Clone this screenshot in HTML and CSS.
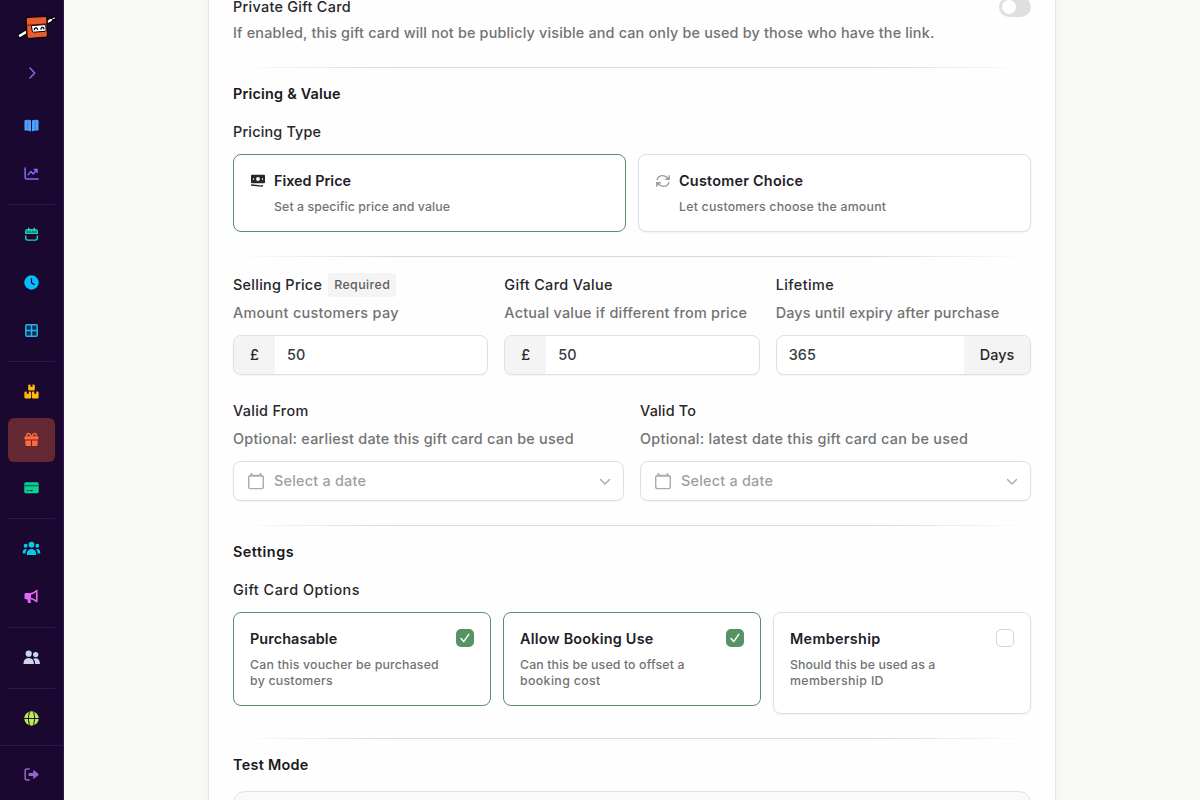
FILE: index.html
```html
<!DOCTYPE html>
<html lang="en">
<head>
<meta charset="utf-8">
<title>Edit Gift Card</title>
<link rel="stylesheet" href="styles.css">
</head>
<body>
<div class="app">
  <aside class="sidebar">
    <div class="brand">
      <svg width="40" height="28" viewBox="0 0 40 28">
        <path d="M3 22.700 9 19.200M31 8.800 36.500 5.300" stroke="#000" stroke-width="4.600" stroke-linecap="round"/>
        <path d="M3 22.700 9 19.200M31.500 8.500 33.800 7" stroke="#fff" stroke-width="2.500" stroke-linecap="round"/>
        <path d="M35.300 6 38 4.800" stroke="#fff" stroke-width="1"/>
        <path d="M9 6.200Q8.900 4.500 10.600 4.300L28 3.300Q29.800 3.200 29.900 5L30.600 22.200Q30.700 24 28.900 24.200L11.800 25.600Q10.200 25.700 10 23.900Z" fill="#ea5a2b" stroke="#09030f" stroke-width="1.400"/>
        <path d="M9.500 12.300 30 10.800" stroke="#5a180e" stroke-width="1"/>
        <path d="M14.400 12.600 28.600 11.600 29.200 17Q29.200 18.200 28.100 18.300L16.600 19.200Q15.400 19.200 15.200 18Z" fill="#fff" stroke="#09030f" stroke-width="1"/>
        <path d="M17.300 17.300Q17.300 14.900 18.900 14.800T20.500 17M24 16.800Q24 14.500 25.500 14.400T27 16.500" fill="none" stroke="#09030f" stroke-width="1.200"/>
      </svg>
    </div>
    <button class="expand" aria-label="Expand">
      <svg width="16" height="16" viewBox="0 0 16 16"><path d="m6 3 4.700 5L6 13" fill="none" stroke="currentColor" stroke-width="1.600" stroke-linecap="round" stroke-linejoin="round"/></svg>
    </button>
    <nav class="nav">
      <a class="item c-blue"><svg viewBox="0 0 16 16"><path d="M.5 3.300Q.5 2.200 1.500 2.100 5 1.500 7.500 2.700V14.500Q4.500 13.200 1.600 13.400 .5 13.400 .5 12.400ZM15.500 3.300Q15.500 2.200 14.500 2.100 11 1.500 8.500 2.700V14.500Q11.500 13.200 14.400 13.400 15.500 13.400 15.500 12.400Z" fill="currentColor"/><path d="M4 2.200V13.300M12 2.200V13.300" stroke="#2f72c4" stroke-width=".7"/></svg></a>
      <a class="item c-indigo"><svg viewBox="0 0 16 16"><path d="M1.200 2V12Q1.200 13.900 2.800 13.900H15M4.500 9.200 7.300 5.900 9.800 8.400 13.500 4.200M10.900 3.700H13.900V6.700" fill="none" stroke="currentColor" stroke-width="1.600" stroke-linecap="round" stroke-linejoin="round"/></svg></a>
      <hr>
      <a class="item c-teal"><svg viewBox="0 0 16 16"><rect x="2" y="3" width="12" height="3.800" rx="1.500" fill="#12706f"/><path d="M1.800 6.800V5Q1.800 3 3.800 3H12.200Q14.200 3 14.200 5V6.800ZM1.800 9.500V11.800Q1.800 14 4 14H12Q14.200 14 14.200 11.800V9.500M5 1.200V4.200M8 3V4.500M11 1.200V4.200" fill="none" stroke="currentColor" stroke-width="1.500" stroke-linecap="round" stroke-linejoin="round"/></svg></a>
      <a class="item c-sky"><svg viewBox="0 0 16 16"><circle cx="8" cy="8" r="7.700" fill="currentColor"/><path d="M8 3.800V8.200L10.700 10" fill="none" stroke="#1b0830" stroke-width="1.300" stroke-linecap="round"/></svg></a>
      <a class="item c-cyanblue"><svg viewBox="0 0 16 16"><rect x="1.900" y="1.900" width="12.200" height="12.200" rx="1.200" fill="#0a2f55" stroke="currentColor" stroke-width="1.600"/><path d="M8 2V14M2 8H14" stroke="currentColor" stroke-width="1.600"/></svg></a>
      <hr>
      <a class="item c-amber"><svg viewBox="0 0 16 16"><path d="M4.500 1.800Q4.500.6 5.700.6H6.900V3H9.100V.6H10.300Q11.500.6 11.500 1.800V5.800Q11.500 7 10.300 7H5.700Q4.500 7 4.500 5.800ZM.4 9.400Q.4 8.100 1.700 8.100H2.900V10.400H5.100V8.100H6.300Q7.600 8.100 7.600 9.400V14.200Q7.600 15.500 6.300 15.500H1.700Q.4 15.500.4 14.200ZM8.400 9.400Q8.400 8.100 9.700 8.100H10.900V10.400H13.100V8.100H14.300Q15.600 8.100 15.600 9.400V14.200Q15.600 15.500 14.300 15.500H9.700Q8.400 15.500 8.400 14.200Z" fill="currentColor"/></svg></a>
      <a class="item active c-orange"><svg viewBox="0 0 16 16"><path d="M7.500 4.500C6.500 1 2.800.7 2.800 3.200 2.800 4.200 3.500 4.500 3.500 4.500M8.500 4.500C9.500 1 13.200.7 13.200 3.200 13.200 4.200 12.500 4.500 12.500 4.500" fill="none" stroke="currentColor" stroke-width="1.500"/><path d="M1.400 4.400H14.600Q15.500 4.400 15.500 5.300V7Q15.500 7.900 14.600 7.900H1.400Q.5 7.900.5 7V5.300Q.5 4.400 1.400 4.400ZM1.500 9H7.400V15H3Q1.500 15 1.500 13.500ZM8.600 9H14.500V13.500Q14.500 15 13 15H8.600Z" fill="currentColor"/></svg></a>
      <a class="item c-green"><svg viewBox="0 0 16 16"><rect x=".3" y="2.300" width="15.400" height="11.800" rx="1.700" fill="currentColor"/><path d="M.3 6H15.700" stroke="#087453" stroke-width="1.700"/><path d="M3 11.300H4.700M6.300 11.300H9.200" stroke="#1b0830" stroke-width="1"/></svg></a>
      <hr>
      <a class="item c-cyan"><svg class="wide" viewBox="0 0 20 16"><g fill="currentColor"><circle cx="10" cy="3.900" r="3.100"/><circle cx="3.800" cy="5" r="2.100"/><circle cx="16.200" cy="5" r="2.100"/><path d="M4.900 15Q4.900 8.400 10 8.400T15.100 15ZM.7 13.200V12Q.7 8.500 4.500 8.500H5.300Q3.500 10.200 3.500 13.200ZM19.300 13.200V12Q19.300 8.500 15.500 8.500H14.700Q16.500 10.200 16.500 13.200Z"/></g></svg></a>
      <a class="item c-pink"><svg viewBox="0 0 16 16"><path d="M2 4.300H7.500V11H6.800L7.300 15H4.400L3.500 11H2Q.5 11 .5 9.500V5.800Q.5 4.300 2 4.300Z" fill="currentColor"/><path d="M7 5.200Q10.500 4.800 13.600 1.600V13.400Q10.500 10.500 7 10.100" fill="none" stroke="currentColor" stroke-width="1.700" stroke-linejoin="round"/><path d="M14.500 6.500Q15.700 7.500 14.500 8.700" fill="currentColor"/></svg></a>
      <hr>
      <a class="item c-slate"><svg class="wide" viewBox="0 0 20 16"><g fill="currentColor"><circle cx="7" cy="3.900" r="3.300"/><circle cx="14.500" cy="4.900" r="2.800"/><path d="M1.400 15Q1.400 8.500 7 8.500T12.600 15ZM13.900 15Q14.100 11 11.700 9.200 19 7.500 19 15Z"/></g></svg></a>
      <hr>
      <a class="item c-lime"><svg viewBox="0 0 16 16"><circle cx="8" cy="8" r="7.700" fill="currentColor"/><path d="M0 8H16M5.800.5Q3.200 8 5.800 15.500M10.200.5Q12.800 8 10.200 15.500" fill="none" stroke="#1b0830" stroke-width="1"/></svg></a>
    </nav>
    <a class="logout"><svg viewBox="0 0 16 16"><path d="M5.500 2.200H3.200Q1.200 2.200 1.200 4.200V11.800Q1.200 13.800 3.200 13.800H5.500" fill="none" stroke="currentColor" stroke-width="1.600" stroke-linecap="round"/><path d="M5.600 6.300H9.800V4.200Q10 3 10.900 3.700L15.200 7.300Q15.900 8 15.200 8.700L10.900 12.300Q10 13 9.800 11.800V9.700H5.600Q4.800 9.700 4.800 8.900V7.100Q4.800 6.300 5.600 6.300Z" fill="currentColor"/></svg></a>
  </aside>

  <main class="page">
    <section class="card">
      <div class="switch-row"><span class="label ls47">Private Gift Card</span><span class="switch"></span></div>
      <p class="desc ls35">If enabled, this gift card will not be publicly visible and can only be used by those who have the link.</p>

      <div class="divider"></div>
      <h2 class="heading ls40">Pricing &amp; Value</h2>
      <div class="label group-label ls37">Pricing Type</div>
      <div class="choices two">
        <div class="choice selected with-icon">
          <svg width="16" height="16" viewBox="0 0 16 16"><path d="M1.800 1.800H14.200Q15 1.800 15 2.600V9.500Q15 10.300 14.200 10.300H1.800Q1 10.300 1 9.500V2.600Q1 1.800 1.800 1.800Z" fill="#27272a"/><circle cx="8" cy="6" r="1.900" fill="#fff"/><path d="M3.500 5.300V6.700M12.500 5.300V6.700" stroke="#fff" stroke-width="1.100"/><path d="M1 12 11.500 13.100 13 12.300" fill="none" stroke="#27272a" stroke-width="1.400"/></svg>
          <div><div class="choice-title ls20">Fixed Price</div><div class="choice-desc ls28">Set a specific price and value</div></div>
        </div>
        <div class="choice with-icon">
          <svg width="16" height="16" viewBox="0 0 16 16"><path d="M2 7Q3 2.600 7.700 2.600 10.700 2.600 13.500 5.600M14.200 2.200V6.200H10.200M14 9.200Q13 13.400 8.300 13.400 5.300 13.400 2.500 10.400M1.800 13.800V9.800H5.800" fill="none" stroke="#9b9b9b" stroke-width="1.400"/></svg>
          <div><div class="choice-title ls44">Customer Choice</div><div class="choice-desc ls40">Let customers choose the amount</div></div>
        </div>
      </div>

      <div class="divider"></div>
      <div class="fields three">
        <div class="field">
          <div class="field-head label"><span class="ls47">Selling Price</span><span class="tag ls60">Required</span></div>
          <p class="desc ls50">Amount customers pay</p>
          <div class="input"><span class="addon">£</span><span class="value ls20">50</span></div>
        </div>
        <div class="field">
          <div class="field-head label ls54">Gift Card Value</div>
          <p class="desc ls42">Actual value if different from price</p>
          <div class="input"><span class="addon">£</span><span class="value ls20">50</span></div>
        </div>
        <div class="field">
          <div class="field-head label ls60">Lifetime</div>
          <p class="desc ls37">Days until expiry after purchase</p>
          <div class="input"><span class="value ls28">365</span><span class="addon suffix ls20">Days</span></div>
        </div>
      </div>
      <div class="fields two-col">
        <div class="field">
          <div class="label ls50">Valid From</div>
          <p class="desc ls43">Optional: earliest date this gift card can be used</p>
          <div class="input picker"><svg width="18" height="18" viewBox="0 0 18 18"><path d="M4.500 1V4M13.500 1V4M2.500 4H15.500" stroke="#aaa" stroke-width="1.700"/><rect x="1.700" y="3.400" width="14.600" height="13.200" rx="1.800" fill="none" stroke="#aaa" stroke-width="1.400"/></svg><span class="placeholder ls42">Select a date</span><svg class="chevron" width="12" height="8" viewBox="0 0 12 8"><path d="m1.500 1.500 4.500 4.500 4.500-4.500" fill="none" stroke="#aaa" stroke-width="1.400" stroke-linecap="round"/></svg></div>
        </div>
        <div class="field">
          <div class="label ls40">Valid To</div>
          <p class="desc ls45">Optional: latest date this gift card can be used</p>
          <div class="input picker"><svg width="18" height="18" viewBox="0 0 18 18"><path d="M4.500 1V4M13.500 1V4M2.500 4H15.500" stroke="#aaa" stroke-width="1.700"/><rect x="1.700" y="3.400" width="14.600" height="13.200" rx="1.800" fill="none" stroke="#aaa" stroke-width="1.400"/></svg><span class="placeholder ls42">Select a date</span><svg class="chevron" width="12" height="8" viewBox="0 0 12 8"><path d="m1.500 1.500 4.500 4.500 4.500-4.500" fill="none" stroke="#aaa" stroke-width="1.400" stroke-linecap="round"/></svg></div>
        </div>
      </div>

      <div class="divider"></div>
      <h2 class="heading ls65">Settings</h2>
      <div class="label group-label ls68">Gift Card Options</div>
      <div class="choices options">
        <div class="choice selected">
          <div><div class="choice-title ls28">Purchasable</div><div class="choice-desc ls35">Can this voucher be purchased<br><span class="ls42">by customers</span></div></div>
          <span class="check on"><svg width="12" height="12" viewBox="0 0 12 12"><path d="m2 6.600 2.700 3 5.100-7.200" fill="none" stroke="#fff" stroke-width="1.500" stroke-linecap="round" stroke-linejoin="round"/></svg></span>
        </div>
        <div class="choice selected">
          <div><div class="choice-title ls42">Allow Booking Use</div><div class="choice-desc ls31">Can this be used to offset a<br><span class="ls54">booking cost</span></div></div>
          <span class="check on"><svg width="12" height="12" viewBox="0 0 12 12"><path d="m2 6.600 2.700 3 5.100-7.200" fill="none" stroke="#fff" stroke-width="1.500" stroke-linecap="round" stroke-linejoin="round"/></svg></span>
        </div>
        <div class="choice tall">
          <div><div class="choice-title ls50">Membership</div><div class="choice-desc ls28">Should this be used as a<br><span class="ls54">membership ID</span></div></div>
          <span class="check"></span>
        </div>
      </div>

      <div class="divider"></div>
      <h2 class="heading ls47">Test Mode</h2>
      <div class="panel"></div>
    </section>
  </main>
</div>
</body>
</html>
```
FILE: styles.css
```css
* { box-sizing: border-box; }
body { margin: 0; font: 500 14.4px/20px Inter, "Liberation Sans", sans-serif; color: #27272a; background: #f9f9f7; }
p, h2 { margin: 0; }
svg { display: block; flex: none; }
.app { display: flex; height: 800px; overflow: hidden; }

/* Sidebar */
.sidebar { display: flex; flex-direction: column; width: 64px; height: 800px; flex: none; background: #1b0830; border-right: 1px solid #321453; }
.brand { display: flex; justify-content: center; padding: 13px 0 0 10px; height: 57px; }
.expand { display: flex; align-items: center; justify-content: center; width: 100%; height: 32px; padding: 0; border: 0; background: none; color: #8a66d0; }
.nav { display: flex; flex-direction: column; gap: 4px; flex: 1; padding: 15px 8px 0; }
.nav hr { width: 100%; height: 1px; margin: 4px 0; border: 0; background: #321453; }
.item { display: flex; align-items: center; justify-content: center; height: 44px; padding-bottom: 1px; flex: none; border-radius: 6px; }
.item svg, .logout svg { width: 15px; height: 15px; }
.item svg.wide { width: 19px; height: 15px; }
.item.active { background: #632831; }
.logout { display: flex; align-items: center; justify-content: center; height: 55px; padding-top: 3px; border-top: 1px solid #321453; color: #9268c8; }
.c-blue { color: #51a2ff; }
.c-indigo { color: #7c70ff; }
.c-teal { color: #22cdb9; }
.c-sky { color: #05bcff; }
.c-cyanblue { color: #2ab0ed; }
.c-amber { color: #ffba0a; }
.c-orange { color: #ff6b3d; }
.c-green { color: #07d494; }
.c-cyan { color: #05cce8; }
.c-pink { color: #e667f8; }
.c-slate { color: #cad5e8; }
.c-lime { color: #b8ed55; }

/* Form card */
.page { flex: 1; padding-left: 144px; background: #f9f9f7; }
.card { width: 848px; height: 840px; margin-top: -20px; padding: 16px 24px 0; border: 1px solid #e6e6e4; background: #fefefe; box-shadow: 0 0 14px rgba(0, 0, 0, .035); }
.switch-row { display: flex; justify-content: space-between; height: 20px; margin-bottom: 6px; }
.switch { width: 32px; height: 20px; padding: 3px; border-radius: 10px; background: #dfdfdf; }
.switch::before { content: ""; display: block; width: 14px; height: 14px; border-radius: 50%; background: #fff; }
.desc { color: #737373; }
.divider { height: 1px; margin-top: 24px; background: linear-gradient(90deg, transparent, #d8dada 20%, #d8dada 80%, transparent); }
.heading { margin-top: 16px; font-size: 14.4px; font-weight: 600; line-height: 20px; color: #18181b; }
.group-label { margin-top: 18px; }

.choices { display: grid; gap: 12px; margin-top: 12px; align-items: start; }
.choices.two { grid-template-columns: 1fr 1fr; }
.choices.options { grid-template-columns: repeat(3, 1fr); }
.choice { display: flex; justify-content: space-between; padding: 16px; border: 1px solid #dfdfe0; border-radius: 8px; background: #fff; box-shadow: 0 1px 2px rgba(0, 0, 0, .05); }
.choice.selected { border-color: #559264; box-shadow: none; }
.choice.with-icon { justify-content: flex-start; gap: 8px; }
.choice.with-icon svg { margin-top: 2px; }
.choice.tall { padding-bottom: 24px; }
.choice-title { font-weight: 600; color: #1e2028; }
.choice-desc { margin-top: 8px; font-size: 12.35px; line-height: 16px; color: #737373; }
.check { width: 18px; height: 18px; flex: none; border: 1px solid #d4d4d4; border-radius: 5px; background: #fff; }
.check.on { display: flex; align-items: center; justify-content: center; border: 0; background: #559264; }

.fields { display: grid; gap: 16px; }
.fields.three { grid-template-columns: repeat(3, 1fr); margin-top: 16px; }
.fields.two-col { grid-template-columns: 1fr 1fr; margin-top: 26px; }
.field-head { display: flex; align-items: center; gap: 6px; height: 24px; margin-bottom: 6px; }
.two-col .desc { margin-top: 8px; }
.tag { height: 24px; padding: 0 6px; border-radius: 3px; background: #f4f4f4; font-size: 12.35px; line-height: 24px; color: #5c5c5e; }
.input { display: flex; align-items: center; height: 40px; margin-top: 12px; border: 1px solid #e0e0e1; border-radius: 8px; background: #fff; box-shadow: 0 1px 2px rgba(0, 0, 0, .05); overflow: hidden; }
.addon { display: flex; align-items: center; justify-content: center; width: 41px; height: 38px; background: #f4f4f4; }
.addon.suffix { width: 66px; }
.value { flex: 1; padding-left: 12px; color: #3b3b3e; }
.picker { padding: 0 12px 0 13px; }
.placeholder { flex: 1; padding-left: 9px; color: #9f9fa1; }
.chevron { margin-top: 1px; }
.panel { height: 60px; margin-top: 16px; border: 1px solid #e0e0e1; border-radius: 12px; background: #fafafa; }

/* Tracking */
.ls20 { letter-spacing: 0; }
.ls28 { letter-spacing: .085px; }
.ls31 { letter-spacing: .12px; }
.ls35 { letter-spacing: .17px; }
.ls37 { letter-spacing: .18px; }
.ls40 { letter-spacing: .21px; }
.ls42 { letter-spacing: .23px; }
.ls43 { letter-spacing: .25px; }
.ls44 { letter-spacing: .24px; }
.ls45 { letter-spacing: .27px; }
.ls47 { letter-spacing: .29px; }
.ls50 { letter-spacing: .31px; }
.ls54 { letter-spacing: .36px; }
.ls60 { letter-spacing: .42px; }
.ls65 { letter-spacing: .5px; }
.ls68 { letter-spacing: .51px; }
```
